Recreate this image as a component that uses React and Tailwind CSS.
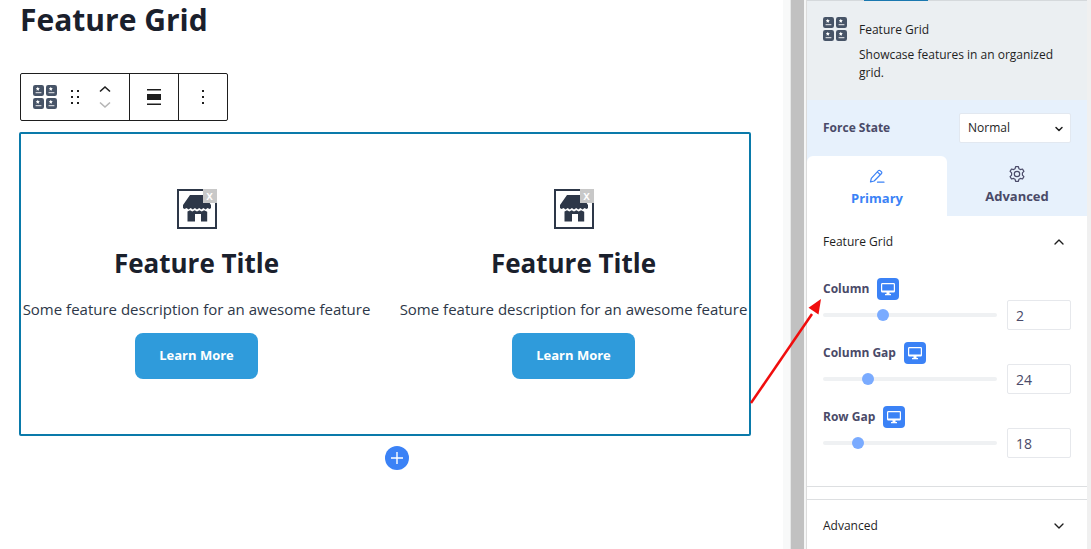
import { useState } from "react";
import { ChevronDown, ChevronUp } from "lucide-react";

const features = [
  { id: 1, title: "Feature Title", text: "Some feature description for an awesome feature" },
  { id: 2, title: "Feature Title", text: "Some feature description for an awesome feature" },
];

const sliders = [
  { id: "column", label: "Column", min: 1, max: 4, value: 2 },
  { id: "columnGap", label: "Column Gap", min: 0, max: 100, value: 24 },
  { id: "rowGap", label: "Row Gap", min: 0, max: 100, value: 18 },
];

function GridTile({ x, y }) {
  return (
    <g transform={`translate(${x} ${y})`}>
      <rect width="11" height="11" rx="2.2" fill="#475467" />
      <path
        d="M4.8 1.8l.6 1.300 1.400.2-1 1 .2 1.400-1.200-.7-1.200.7.2-1.400-1-1 1.400-.2z"
        fill="#fff"
      />
      <path d="M2.600 7.700h5.800" stroke="#fff" strokeWidth="0.9" />
    </g>
  );
}

function FeatureGridIcon() {
  return (
    <svg width="24" height="24" viewBox="0 0 24 24" className="shrink-0" aria-hidden="true">
      <GridTile x={0} y={0} />
      <GridTile x={13} y={0} />
      <GridTile x={0} y={13} />
      <GridTile x={13} y={13} />
    </svg>
  );
}

function StoreIcon() {
  return (
    <svg width="28" height="28" viewBox="0 0 28 28" fill="#2d3748" aria-hidden="true">
      <path d="M7 0h14.500l6.300 9.800a2.500 2.500 0 0 1-1.300 4.200l-1.900-.9-2.100 1.300-2.100-1.300-2.100 1.300-2.100-1.300-2.200 1.300-2.100-1.300-2.100 1.300-2.100-1.300-2.100 1.300-2.100-1.300-1.900.9a2.500 2.500 0 0 1-1.400-4.200z" />
      <path d="M4.500 16.500l2.500-1.300 2.300 1.400 2.400-1.400 2.300 1.400 2.400-1.400 2.300 1.400 2.400-1.400 3.100 1.500V26.500h-6.200v-7.500h-6v7.500h-7.500z" />
    </svg>
  );
}

function MonitorIcon() {
  return (
    <svg width="14" height="13" viewBox="0 0 14 13" aria-hidden="true">
      <rect x="0.6" y="0.6" width="12.8" height="8.400" rx="0.8" fill="none" stroke="#fff" strokeWidth="1.2" />
      <path d="M1 7.500h12v1.500h-12zM5.500 9h3v2h1.500v1.200h-6v-1.200h1.500z" fill="#fff" />
    </svg>
  );
}

function FeatureCard({ feature }) {
  return (
    <div className="flex min-w-0 flex-col items-center">
      <div className="relative flex size-10 items-center justify-center border-2 border-[#2d3748]">
        <StoreIcon />
        <button
          type="button"
          className="absolute -top-0.5 -right-0.5 flex size-3.5 items-center justify-center bg-[#c8c8c8] text-xs leading-none font-semibold text-white"
        >
          x
        </button>
      </div>
      <h2 className="mt-4 text-[26px] leading-9 font-bold text-[#1a202c]">{feature.title}</h2>
      <p className="mt-4 text-[15px] leading-6 whitespace-nowrap text-[#2d3748]">{feature.text}</p>
      <a
        href="#"
        className="mt-3 flex h-[46px] items-center rounded-lg bg-[#2f9bdb] px-6 text-[13px] font-bold text-white"
      >
        Learn More
      </a>
    </div>
  );
}

function BlockToolbar() {
  return (
    <div className="flex h-12 w-fit divide-x divide-[#1e1e1e] rounded-xs border border-[#1e1e1e]">
      <div className="flex items-center pr-3 pl-3">
        <button type="button" aria-label="Feature Grid">
          <FeatureGridIcon />
        </button>
        <button type="button" aria-label="Drag" className="ml-3">
          <svg width="12" height="16" viewBox="0 0 12 16" fill="#1e1e1e">
            <path d="M2 1h2v2H2zM8 1h2v2H8zM2 7h2v2H2zM8 7h2v2H8zM2 13h2v2H2zM8 13h2v2H8z" />
          </svg>
        </button>
        <div className="ml-3 flex w-6 flex-col items-center gap-2">
          <button type="button" aria-label="Move up">
            <svg width="12" height="8" viewBox="0 0 12 8" fill="none" stroke="#1e1e1e" strokeWidth="1.6">
              <path d="M1 6.500L6 2l5 4.500" />
            </svg>
          </button>
          <button type="button" aria-label="Move down" disabled>
            <svg width="12" height="8" viewBox="0 0 12 8" fill="none" stroke="#b5b5b5" strokeWidth="1.6">
              <path d="M1 1.500L6 6l5-4.500" />
            </svg>
          </button>
        </div>
      </div>
      <button type="button" aria-label="Align" className="flex w-[49px] items-center justify-center">
        <svg width="14" height="16" viewBox="0 0 14 16" fill="#1e1e1e">
          <path d="M0 0h14v1.500H0zM0 5h14v6H0zM0 14.500h14v1.500H0z" />
        </svg>
      </button>
      <button type="button" aria-label="Options" className="flex w-12 items-center justify-center">
        <svg width="4" height="16" viewBox="0 0 4 16" fill="#1e1e1e">
          <path d="M1 1h2v2H1zM1 7h2v2H1zM1 13h2v2H1z" />
        </svg>
      </button>
    </div>
  );
}

function SliderControl({ slider, value, onChange }) {
  return (
    <div className="h-16">
      <div className="flex items-center gap-2">
        <label htmlFor={slider.id} className="text-xs leading-5 font-bold text-[#4a4a68]">
          {slider.label}
        </label>
        <button
          type="button"
          aria-label="Desktop"
          className="flex size-[22px] items-center justify-center rounded bg-[#3b82f6]"
        >
          <MonitorIcon />
        </button>
      </div>
      <div className="flex items-center gap-2.5">
        <input
          id={slider.id}
          type="range"
          min={slider.min}
          max={slider.max}
          value={value}
          onChange={(e) => onChange(e.target.value)}
          className="h-1 min-w-0 flex-1 appearance-none rounded-full bg-[#eff1f3] [&::-webkit-slider-thumb]:size-3 [&::-webkit-slider-thumb]:appearance-none [&::-webkit-slider-thumb]:rounded-full [&::-webkit-slider-thumb]:bg-[#7aabff]"
        />
        <input
          type="number"
          aria-label={slider.label}
          value={value}
          onChange={(e) => onChange(e.target.value)}
          className="h-[30px] w-16 appearance-none rounded-xs border border-[#e6e8ec] px-2 text-sm text-[#4a4a68] [&::-webkit-inner-spin-button]:appearance-none"
        />
      </div>
    </div>
  );
}

function Sidebar() {
  const [values, setValues] = useState({ column: 2, columnGap: 24, rowGap: 18 });
  const [state, setState] = useState("Normal");

  return (
    <aside className="relative w-[281px] shrink-0 border-l border-[#dcdcdc] bg-white">
      <div className="flex h-px bg-[#d5d9dc]">
        <div className="ml-[57px] w-16 bg-[#1a78b0]" />
      </div>
      <div className="flex gap-3 bg-[#ebeff2] px-4 pt-4 pb-[18px]">
        <FeatureGridIcon />
        <div className="pt-[3px]">
          <h2 className="text-xs leading-5 font-medium text-[#1e1e1e]">Feature Grid</h2>
          <p className="mt-1.5 text-xs leading-[18px] text-[#1e1e1e]">Showcase features in an organized grid.</p>
        </div>
      </div>

      <div className="bg-[#e7f1fc]">
        <div className="flex h-14 items-center justify-between px-4">
          <label htmlFor="forceState" className="text-xs font-bold text-[#4a4a68]">
            Force State
          </label>
          <div className="relative">
            <select
              id="forceState"
              value={state}
              onChange={(e) => setState(e.target.value)}
              className="h-[30px] w-28 appearance-none rounded-xs border border-[#e2e8f0] bg-white px-2 text-xs text-[#1e1e1e]"
            >
              <option>Normal</option>
              <option>Hover</option>
            </select>
            <ChevronDown size={12} strokeWidth={3} className="pointer-events-none absolute top-2.5 right-1.5 text-[#1e1e1e]" />
          </div>
        </div>
        <div className="flex">
          <button
            type="button"
            className="flex h-[60px] flex-1 flex-col items-center gap-1 rounded-t-md bg-white pt-3 text-[13px] leading-5 font-bold text-[#3b82f6]"
          >
            <svg width="16" height="16" viewBox="0 0 16 16" fill="none" stroke="#3b82f6" strokeWidth="1.2" strokeLinejoin="round" strokeLinecap="round">
              <path d="M1.500 14l.8-3.700L9.400 2.700a1.200 1.200 0 0 1 1.700-.1l1.300 1.200a1.200 1.200 0 0 1 .1 1.700L5.200 13zM8.300 3.900l3 2.800M8.500 14.200h6.500" />
            </svg>
            Primary
          </button>
          <button
            type="button"
            className="flex h-[60px] flex-1 flex-col items-center gap-1 pt-2.5 text-[13px] leading-5 font-bold text-[#4a4a68]"
          >
            <svg width="16" height="16" viewBox="0 0 16 16" fill="none" stroke="#4a4a68" strokeWidth="1.2" strokeLinejoin="round">
              <path d="M6.600 .6h2.800l.5 2.100 1.500.9 2.100-.6 1.400 2.400-1.500 1.500v2.200l1.500 1.500-1.400 2.400-2.100-.6-1.500.9-.5 2.100H6.600l-.5-2.100-1.500-.9-2.100.6-1.400-2.400 1.500-1.500V6.900L1.100 5.400 2.500 3l2.100.6 1.500-.9z" />
              <circle cx="8" cy="8" r="2.700" />
            </svg>
            Advanced
          </button>
        </div>
      </div>

      <section className="border-b border-[#dddfe1] px-4 pt-4 pb-4">
        <button type="button" className="flex w-full items-center justify-between pr-1 text-xs leading-5 font-medium text-[#1e1e1e]">
          Feature Grid
          <ChevronUp size={16} />
        </button>
        <div className="mt-[26px]">
          {sliders.map((slider) => (
            <SliderControl
              key={slider.id}
              slider={slider}
              value={values[slider.id]}
              onChange={(value) => setValues({ ...values, [slider.id]: value })}
            />
          ))}
        </div>
      </section>
      <section className="mt-3 border-t border-[#dddfe1] px-4 py-4">
        <button type="button" className="flex w-full items-center justify-between pr-1 text-xs leading-5 font-medium text-[#1e1e1e]">
          Advanced
          <ChevronDown size={16} />
        </button>
      </section>

      {/* arrow from the block to the column control */}
      <svg width="74" height="108" viewBox="0 0 74 108" className="pointer-events-none absolute top-[297px] -left-[58px]">
        <path d="M2 106L63 17" stroke="#f00d0d" strokeWidth="2.500" />
        <path d="M72 2L69.500 17.500 59.500 10.800z" fill="#f00d0d" />
      </svg>
    </aside>
  );
}

export default function App() {
  return (
    <div className="flex h-screen overflow-hidden bg-white font-['Open_Sans','Noto_Sans',sans-serif]">
      <main className="min-w-0 flex-1 pr-8 pl-5">
        <h1 className="text-[30px] leading-10 font-bold text-[#1a202c]">Feature Grid</h1>
        <div className="mt-[33px]">
          <BlockToolbar />
        </div>
        <div className="mt-[11px] -ml-px grid grid-cols-2 gap-[26px] rounded-xs border-2 border-[#0a7aaa] pt-[55px] pb-[55px]">
          {features.map((feature) => (
            <FeatureCard key={feature.id} feature={feature} />
          ))}
        </div>
        <div className="mt-2.5 flex justify-center pl-[22px]">
          <button
            type="button"
            aria-label="Add feature"
            className="flex size-6 items-center justify-center rounded-full bg-[#3b82f6]"
          >
            <svg width="12" height="12" viewBox="0 0 12 12" stroke="#fff" strokeWidth="1.400">
              <path d="M6 0v12M0 6h12" />
            </svg>
          </button>
        </div>
      </main>
      <div className="w-2 shrink-0 border-r border-[#e6e8e8] bg-[#f8f9f9]" />
      <div className="w-[13px] shrink-0 bg-[#c1c1c1]" />
      <div className="w-0.5 shrink-0 bg-[#f5f6f6]" />
      <Sidebar />
      <div className="w-1 shrink-0 bg-[#f0f0f0]" />
    </div>
  );
}
